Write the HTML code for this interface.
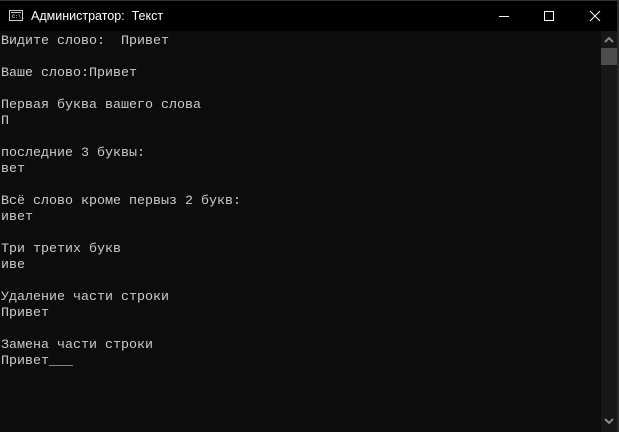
<!DOCTYPE html>
<html><head><meta charset="utf-8"><style>
html,body{margin:0;padding:0;width:619px;height:432px;overflow:hidden;background:#0c0c0c}
.title{position:absolute;left:0;top:0;width:619px;height:31px;background:#000;border-top:1px solid #333;box-sizing:border-box}
.ttxt{position:absolute;left:31px;top:8px;color:#fff;font:12.5px "Liberation Sans",sans-serif}
.ico{position:absolute;left:9px;top:9px;width:14px;height:11px;border:1px solid #ccc;background:#000;box-sizing:border-box}
.ico i{position:absolute;left:1px;top:1px;width:10px;height:1px;background:#ccc}
.ico b{position:absolute;left:2px;top:3px;color:#ccc;font:bold 5px "Liberation Mono",monospace}
.con{position:absolute;left:1px;top:34px;margin:0;color:#cccccc;font:13.33px/16px "Liberation Mono","DejaVu Sans Mono",monospace;white-space:pre}
.sb{position:absolute;left:601px;top:31px;width:16px;height:401px;background:#171717}
.thumb{position:absolute;left:601px;top:48px;width:16px;height:17px;background:#4d4d4d}
.edge{position:absolute;left:617px;top:0;width:2px;height:432px;background:#2b2b2b}
</style></head><body>
<div class="title">
<div class="ico"><i></i><b>C:\_</b></div>
<div class="ttxt">Администратор:&nbsp; Текст</div>
<svg style="position:absolute;left:470px;top:0" width="149" height="31">
<line x1="29" y1="15.5" x2="39" y2="15.5" stroke="#fff" stroke-width="1"/>
<rect x="74.5" y="10.5" width="9" height="9" fill="none" stroke="#fff" stroke-width="1"/>
<line x1="120" y1="10" x2="130" y2="20" stroke="#fff"/><line x1="130" y1="10" x2="120" y2="20" stroke="#fff"/>
</svg>
</div>
<pre class="con">Видите слово:  Привет

Ваше слово:Привет

Первая буква вашего слова
П

последние 3 буквы:
вет

Всё слово кроме первыз 2 букв:
ивет

Три третих букв
иве

Удаление части строки
Привет

Замена части строки
Привет___</pre>
<div class="sb"></div>
<div class="thumb"></div>
<svg style="position:absolute;left:601px;top:35px" width="16" height="10"><polyline points="4,7 8,3 12,7" fill="none" stroke="#888" stroke-width="2"/></svg>
<svg style="position:absolute;left:601px;top:416px" width="16" height="10"><polyline points="4,3 8,7 12,3" fill="none" stroke="#888" stroke-width="2"/></svg>
<div class="edge"></div>
</body></html>
